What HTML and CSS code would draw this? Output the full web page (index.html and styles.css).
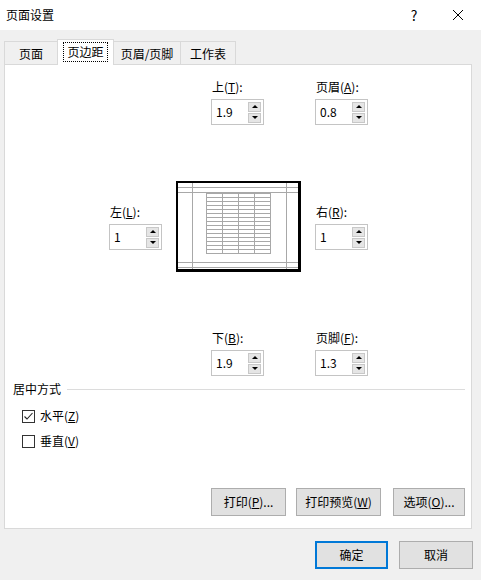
FILE: index.html
```html
<!DOCTYPE html>
<html lang="zh-CN">
<head>
<meta charset="utf-8">
<title>页面设置</title>
<link rel="stylesheet" href="styles.css">
</head>
<body>
<div class="window">
  <div class="titlebar">
    <span class="title">页面设置</span>
    <span class="help">?</span>
    <span class="close"><svg width="12" height="12" viewBox="0 0 12 12"><path d="M1 1 L11 11 M11 1 L1 11" stroke="#000" stroke-width="1" fill="none"/></svg></span>
  </div>
  <div class="main">
    <div class="tabs">
      <div class="tab t1">页面</div>
      <div class="tab active t2"><span class="focus">页边距</span></div>
      <div class="tab t3">页眉/页脚</div>
      <div class="tab t4">工作表</div>
    </div>
    <div class="panel">
      <div class="row row-top">
        <div class="field">
          <div class="lbl">上(<u>T</u>):</div>
          <div class="spin"><span class="val">1.9</span><div class="arrows"><div class="arr up"><i></i></div><div class="arr down"><i></i></div></div></div>
        </div>
        <div class="field">
          <div class="lbl">页眉(<u>A</u>):</div>
          <div class="spin"><span class="val">0.8</span><div class="arrows"><div class="arr up"><i></i></div><div class="arr down"><i></i></div></div></div>
        </div>
      </div>
      <div class="row row-mid">
        <div class="field f-left">
          <div class="lbl">左(<u>L</u>):</div>
          <div class="spin"><span class="val">1</span><div class="arrows"><div class="arr up"><i></i></div><div class="arr down"><i></i></div></div></div>
        </div>
        <svg class="preview" width="126" height="92" viewBox="0 0 126 92" shape-rendering="crispEdges">
          <g stroke="#a8a8a8" stroke-width="1" fill="none">
            <path d="M2 6.5 H122 M2 11.5 H122 M2 81.5 H122 M2 86.5 H122"/>
            <path d="M16.5 2 V88 M110.5 2 V88"/>
            <rect x="30.5" y="12.5" width="64" height="60"/>
            <path d="M46.5 12.5 V72.5 M62.5 12.5 V72.5 M78.5 12.5 V72.5"/>
            <path d="M30.5 16.5 H94.5 M30.5 20.5 H94.5 M30.5 24.5 H94.5 M30.5 28.5 H94.5 M30.5 32.5 H94.5 M30.5 36.5 H94.5 M30.5 40.5 H94.5 M30.5 44.5 H94.5 M30.5 48.5 H94.5 M30.5 52.5 H94.5 M30.5 56.5 H94.5 M30.5 60.5 H94.5 M30.5 64.5 H94.5 M30.5 68.5 H94.5"/>
          </g>
          <g fill="#000">
            <rect x="0" y="0" width="125" height="2"/>
            <rect x="0" y="0" width="2" height="91"/>
            <rect x="122" y="0" width="3" height="91"/>
            <rect x="0" y="88" width="125" height="3"/>
          </g>
        </svg>
        <div class="field f-right">
          <div class="lbl">右(<u>R</u>):</div>
          <div class="spin"><span class="val">1</span><div class="arrows"><div class="arr up"><i></i></div><div class="arr down"><i></i></div></div></div>
        </div>
      </div>
      <div class="row row-bot">
        <div class="field">
          <div class="lbl">下(<u>B</u>):</div>
          <div class="spin"><span class="val">1.9</span><div class="arrows"><div class="arr up"><i></i></div><div class="arr down"><i></i></div></div></div>
        </div>
        <div class="field">
          <div class="lbl">页脚(<u>F</u>):</div>
          <div class="spin"><span class="val">1.3</span><div class="arrows"><div class="arr up"><i></i></div><div class="arr down"><i></i></div></div></div>
        </div>
      </div>
      <div class="group"><span class="group-title">居中方式</span><div class="rule"></div></div>
      <div class="check c1">
        <span class="box"><svg width="11" height="11" viewBox="0 0 11 11"><path d="M1.5 5.5 L4 8 L9.5 2" stroke="#222" stroke-width="1.1" fill="none"/></svg></span>
        <span class="clbl">水平(<u>Z</u>)</span>
      </div>
      <div class="check c2">
        <span class="box"></span>
        <span class="clbl">垂直(<u>V</u>)</span>
      </div>
      <div class="panel-buttons">
        <div class="btn b-print">打印(<u>P</u>)...</div>
        <div class="btn b-preview">打印预览(<u>W</u>)</div>
        <div class="btn b-options">选项(<u>O</u>)...</div>
      </div>
    </div>
    <div class="footer">
      <div class="btn b-ok">确定</div>
      <div class="btn b-cancel">取消</div>
    </div>
  </div>
</div>
</body>
</html>
```

FILE: styles.css
```css
* { box-sizing: border-box; }
html, body { margin: 0; padding: 0; }
body {
  background: #f0f0f0;
  font-family: "Noto Sans CJK SC", sans-serif;
  font-size: 12px;
  color: #000;
}
u { text-decoration: underline; text-underline-offset: 1px; }
.window { width: 481px; height: 580px; background: #f0f0f0; overflow: hidden; }

.titlebar {
  height: 30px;
  background: #fff;
  display: flex;
  align-items: center;
  padding-left: 6px;
}
.title { line-height: 30px; flex: 1; }
.help { font-size: 14px; width: 20px; margin-right: 28px; text-align: center; line-height: 30px; }
.close { width: 12px; height: 12px; margin-right: 17px; display: flex; }

.main { padding-top: 9px; }

.tabs {
  display: flex;
  align-items: flex-end;
  height: 25px;
  padding-left: 4px;
}
.tab {
  height: 23px;
  border: 1px solid #d9d9d9;
  border-bottom: none;
  background: #f0f0f0;
  display: flex;
  align-items: center;
  justify-content: center;
  line-height: 16px;
  padding-top: 1px;
}
.tab + .tab { margin-left: -1px; }
.t1 { width: 54px; }
.t2 { width: 57px; }
.t3 { width: 68px; }
.t4 { width: 56px; }
.tab.active {
  height: 26px;
  background: #fff;
  margin-bottom: -1px;
  position: relative;
  z-index: 1;
  padding-top: 0;
  padding-bottom: 2px;
}
.focus {
  border: 1px dotted #000;
  padding: 1px 3px;
  line-height: 16px;
}

.panel {
  margin-left: 4px;
  width: 468px;
  height: 465px;
  background: #fff;
  border: 1px solid #d9d9d9;
  display: flex;
  flex-direction: column;
}

.row { display: flex; align-items: flex-start; }
.row-top { margin-top: 14px; padding-left: 206px; gap: 51px; }
.row-mid { margin-top: 56px; padding-left: 104px; }
.row-bot { margin-top: 57px; padding-left: 206px; gap: 51px; }

.field { width: 53px; }
.lbl { line-height: 16px; height: 16px; margin-bottom: 4px; padding-left: 1px; white-space: nowrap; }
.f-left { margin-top: 23px; }
.f-right { margin-top: 23px; margin-left: 13px; }
.preview { display: block; margin-left: 14px; }

.spin {
  width: 53px;
  height: 26px;
  border: 1px solid #c4c4c4;
  background: #fff;
  display: flex;
  align-items: center;
}
.val { padding-left: 4px; line-height: 16px; flex: 1; }
.arrows {
  width: 13px;
  margin-right: 2px;
  display: flex;
  flex-direction: column;
  gap: 1px;
}
.arr {
  height: 10px;
  background: #e5e5e5;
  border: 1px solid #c8c8c8;
  display: flex;
  align-items: center;
  justify-content: center;
}
.arr i { display: block; width: 0; height: 0; border-left: 3px solid transparent; border-right: 3px solid transparent; }
.up i { border-bottom: 3px solid #000; }
.down i { border-top: 3px solid #000; }

.group {
  margin-top: 5px;
  display: flex;
  align-items: center;
  padding-left: 8px;
  padding-right: 6px;
  height: 16px;
}
.group-title { line-height: 16px; }
.rule { flex: 1; height: 1px; background: #dcdcdc; margin-left: 6px; }

.check { display: flex; align-items: center; height: 16px; padding-left: 17px; }
.c1 { margin-top: 11px; }
.c2 { margin-top: 9px; }
.box {
  width: 13px; height: 13px;
  border: 1px solid #333;
  background: #fff;
  display: flex;
  align-items: center;
  justify-content: center;
}
.clbl { margin-left: 5px; line-height: 16px; }

.panel-buttons {
  margin-top: auto;
  margin-bottom: 12px;
  display: flex;
  justify-content: flex-end;
  padding-right: 6px;
}
.btn {
  height: 28px;
  background: #e1e1e1;
  border: 1px solid #adadad;
  display: flex;
  align-items: center;
  justify-content: center;
  line-height: 16px;
  white-space: nowrap;
}
.b-print { width: 75px; }
.b-preview { width: 85px; margin-left: 10px; }
.b-options { width: 72px; margin-left: 12px; }

.footer {
  margin-top: 12px;
  display: flex;
  justify-content: flex-end;
  padding-right: 8px;
}
.b-ok { width: 73px; border: 2px solid #0078d7; }
.b-cancel { width: 74px; margin-left: 11px; }
```
